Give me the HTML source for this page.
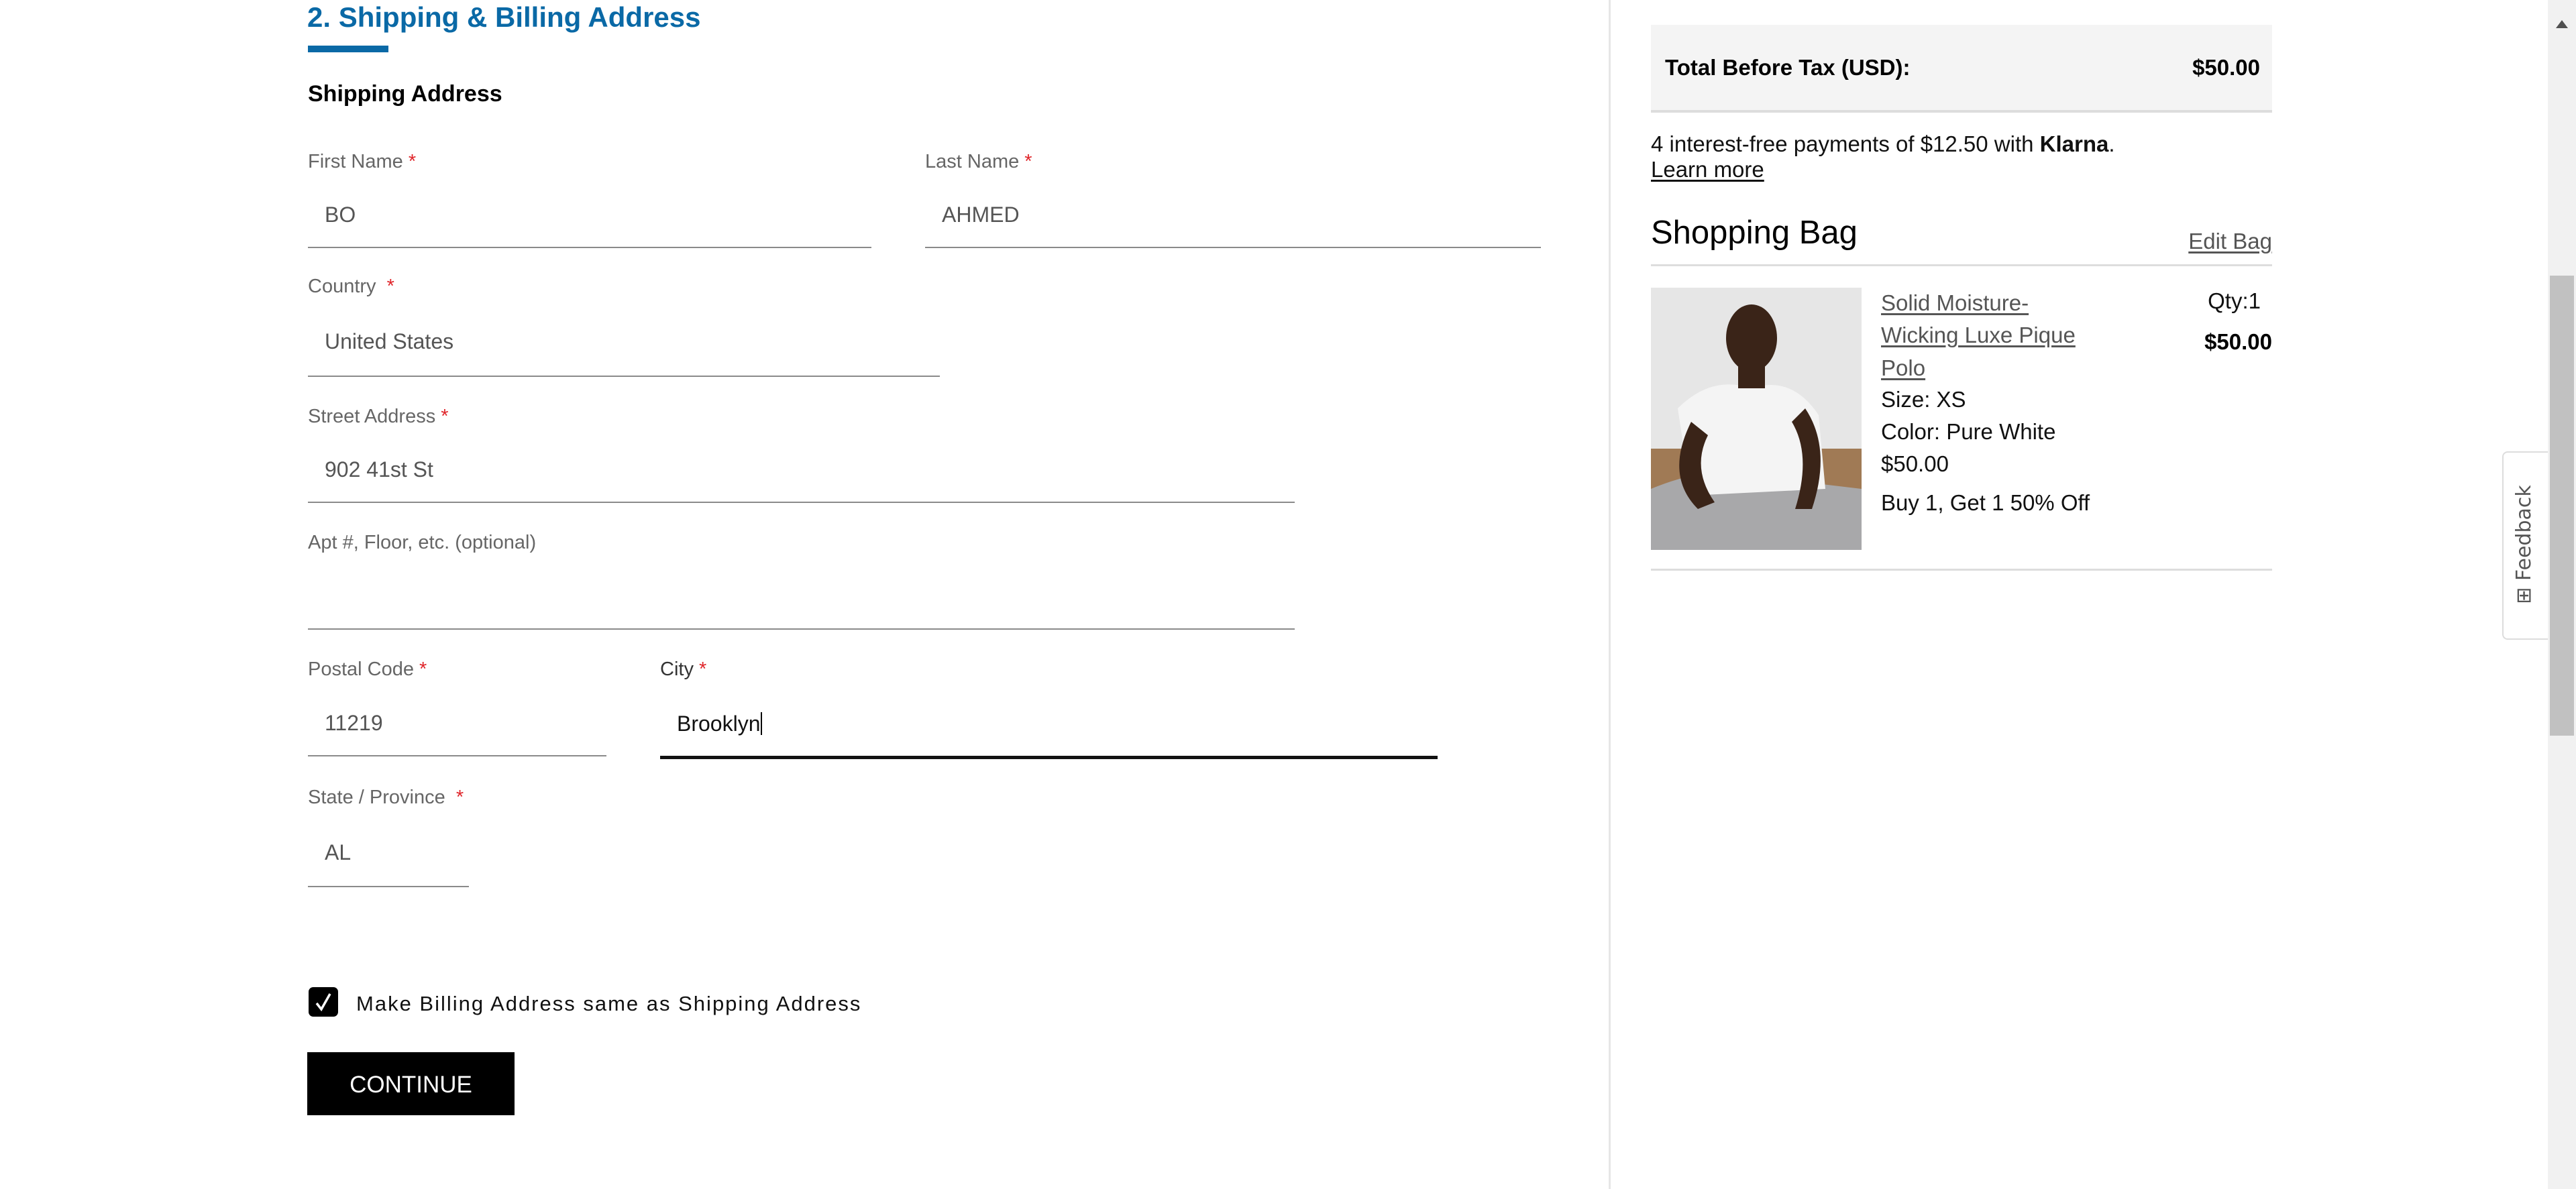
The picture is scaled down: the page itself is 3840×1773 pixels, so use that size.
<!DOCTYPE html>
<html><head><meta charset="utf-8"><style>
html,body{margin:0;padding:0;background:#fff;width:3840px;height:1773px;overflow:hidden;font-family:"Liberation Sans",Arial,sans-serif;}
.a{position:absolute;white-space:nowrap;line-height:1;}
.lbl{font-size:29px;color:#666;}
.lbl b{color:#e0262b;font-weight:normal;}
.val{font-size:32px;color:#555;}
.ln{position:absolute;height:2px;background:#8a8a8a;}
.r{font-size:33px;color:#111;}
u{text-underline-offset:4px;}
</style></head><body>
<div class="a" style="left:458px;top:5px;font-size:42px;font-weight:bold;color:#0a69a6;">2. Shipping &amp; Billing Address</div>
<div style="position:absolute;left:459px;top:68px;width:120px;height:10px;background:#0a69a6"></div>
<div class="a" style="left:459px;top:123px;font-size:34px;font-weight:bold;color:#000">Shipping Address</div>

<div class="a lbl" style="left:459px;top:227px">First Name <b>*</b></div>
<div class="a val" style="left:484px;top:304px">BO</div>
<div class="ln" style="left:459px;top:368px;width:840px"></div>
<div class="a lbl" style="left:1379px;top:227px">Last Name <b>*</b></div>
<div class="a val" style="left:1404px;top:304px">AHMED</div>
<div class="ln" style="left:1379px;top:368px;width:918px"></div>

<div class="a lbl" style="left:459px;top:413px">Country &nbsp;<b>*</b></div>
<div class="a val" style="left:484px;top:493px">United States</div>
<div class="ln" style="left:459px;top:560px;width:942px"></div>

<div class="a lbl" style="left:459px;top:607px">Street Address <b>*</b></div>
<div class="a val" style="left:484px;top:684px">902 41st St</div>
<div class="ln" style="left:459px;top:748px;width:1471px"></div>

<div class="a lbl" style="left:459px;top:795px">Apt #, Floor, etc. (optional)</div>
<div class="ln" style="left:459px;top:937px;width:1471px"></div>

<div class="a lbl" style="left:459px;top:984px">Postal Code <b>*</b></div>
<div class="a val" style="left:484px;top:1062px">11219</div>
<div class="ln" style="left:459px;top:1126px;width:445px"></div>
<div class="a lbl" style="left:984px;top:984px;color:#333">City <b>*</b></div>
<div class="a val" style="left:1009px;top:1062px;color:#111">Brooklyn<span style="display:inline-block;width:2px;height:34px;background:#000;vertical-align:-6px"></span></div>
<div style="position:absolute;left:984px;top:1127px;width:1159px;height:5px;background:#111"></div>

<div class="a lbl" style="left:459px;top:1175px">State / Province &nbsp;<b>*</b></div>
<div class="a val" style="left:484px;top:1255px">AL</div>
<div class="ln" style="left:459px;top:1321px;width:240px"></div>

<div style="position:absolute;left:460px;top:1472px;width:44px;height:44px;background:#000;border-radius:7px"></div>
<svg style="position:absolute;left:460px;top:1472px" width="44" height="44"><path d="M12 24 L19 33 L32 10" stroke="#fff" stroke-width="3.5" fill="none"/></svg>
<div class="a" style="left:531px;top:1481px;font-size:31px;color:#111;letter-spacing:2px">Make Billing Address same as Shipping Address</div>

<div style="position:absolute;left:458px;top:1569px;width:309px;height:94px;background:#000;color:#fff;font-size:35px;line-height:98px;text-align:center">CONTINUE</div>

<div style="position:absolute;left:2398px;top:0;width:3px;height:1773px;background:#e6e6e6"></div>

<div style="position:absolute;left:2461px;top:37px;width:926px;height:127px;background:#f4f4f4;border-bottom:4px solid #ddd"></div>
<div class="a" style="left:2482px;top:84px;font-size:33px;font-weight:bold;color:#000">Total Before Tax (USD):</div>
<div class="a" style="right:471px;top:84px;font-size:33px;font-weight:bold;color:#000">$50.00</div>

<div class="a r" style="left:2461px;top:198px;font-size:33px">4 interest-free payments of $12.50 with <b>Klarna</b>.</div>
<div class="a r" style="left:2461px;top:236px;font-size:33px"><u>Learn more</u></div>

<div class="a" style="left:2461px;top:323px;font-size:49px;color:#000">Shopping Bag</div>
<div class="a" style="right:453px;top:343px;font-size:33px;color:#555"><u>Edit Bag</u></div>
<div style="position:absolute;left:2461px;top:394px;width:926px;height:3px;background:#ddd"></div>

<svg style="position:absolute;left:2461px;top:429px" width="314" height="391" viewBox="0 0 314 391">
<rect width="314" height="391" fill="#e6e6e6"/>
<rect y="240" width="314" height="151" fill="#a07a55"/>
<path d="M0 300 Q120 250 230 290 L314 300 L314 391 L0 391Z" fill="#a8a8aa"/>
<path d="M40 180 Q90 130 150 150 Q210 130 250 190 L260 300 L60 310Z" fill="#f4f4f4"/>
<ellipse cx="150" cy="75" rx="38" ry="50" fill="#3a2418"/>
<rect x="130" y="110" width="40" height="40" fill="#3a2418"/>
<path d="M230 180 Q270 240 240 330 L215 330 Q240 250 210 200Z" fill="#3a2418"/>
<path d="M60 200 Q20 280 70 330 L95 320 Q60 270 85 220Z" fill="#3a2418"/>
</svg>

<div class="a r" style="left:2804px;top:435px;color:#555"><u>Solid Moisture-</u></div>
<div class="a r" style="left:2804px;top:483px;color:#555"><u>Wicking Luxe Pique</u></div>
<div class="a r" style="left:2804px;top:532px;color:#555"><u>Polo</u></div>
<div class="a r" style="left:2804px;top:579px">Size: XS</div>
<div class="a r" style="left:2804px;top:627px">Color: Pure White</div>
<div class="a r" style="left:2804px;top:675px">$50.00</div>
<div class="a r" style="left:2804px;top:733px">Buy 1, Get 1 50% Off</div>
<div class="a r" style="right:470px;top:432px">Qty:1</div>
<div class="a r" style="right:453px;top:493px;font-weight:bold;color:#000">$50.00</div>
<div style="position:absolute;left:2461px;top:848px;width:926px;height:3px;background:#ddd"></div>

<div style="position:absolute;left:3730px;top:673px;width:66px;height:277px;border:2px solid #ddd;border-right:none;border-radius:8px 0 0 8px;background:#fff"></div>
<div class="a" style="left:3763px;top:812px;transform:translate(-50%,-50%) rotate(-90deg);font-family:'DejaVu Sans',sans-serif;font-size:30px;color:#555">&#8862; Feedback</div>

<div style="position:absolute;left:3798px;top:0;width:42px;height:1773px;background:#f1f1f1"></div>
<div style="position:absolute;left:3801px;top:411px;width:36px;height:686px;background:#c1c1c1"></div>
<svg style="position:absolute;left:3808px;top:28px" width="22" height="16"><path d="M11 2 L20 14 L2 14Z" fill="#505050"/></svg>
</body></html>
